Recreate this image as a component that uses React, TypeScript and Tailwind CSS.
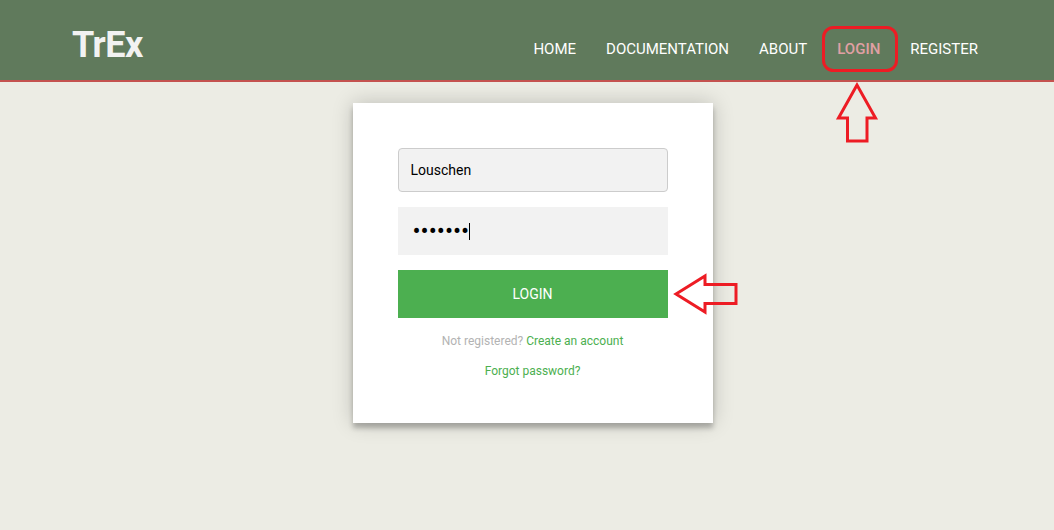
import { useState } from "react";

const navItems = ["Home", "Documentation", "About", "Login", "Register"];

function Annotations() {
  // red callouts drawn over the screenshot
  return (
    <svg
      className="pointer-events-none absolute inset-0"
      width="1054"
      height="530"
      viewBox="0 0 1054 530"
      fill="none"
      stroke="#ed1c24"
      strokeWidth="3"
      strokeLinejoin="miter"
    >
      <rect x="823.5" y="27.5" width="73" height="43" rx="10" />
      <path d="M857 85 L838.5 118 L847.5 118 L847.5 141 L867 141 L867 118 L875.5 118 Z" />
      <path d="M676 294 L705 276 L705 284.5 L736 284.5 L736 303.5 L705 303.5 L705 312 Z" />
    </svg>
  );
}

export default function App() {
  const [user, setUser] = useState("Louschen");
  const [pass, setPass] = useState("1234567");

  return (
    <div
      className="relative min-h-[530px] bg-[#ecece4]"
      style={{ fontFamily: "Roboto, 'Liberation Sans', sans-serif" }}
    >
      <header className="flex h-[82px] items-center justify-between border-b-2 border-[#c4524f] bg-[#607a5c] pl-[72px] pr-[61px] pt-[12px]">
        <a href="#" className="pb-[2px] text-[36px] font-bold leading-none tracking-[-0.5px] text-[#f2f2f2]">
          TrEx
        </a>
        <nav className="mt-[8px] flex items-center pb-[2px] text-[15px] uppercase">
          {navItems.map((item) => (
            <a
              key={item}
              href="#"
              className={
                item === "Login"
                  ? "px-[15px] font-medium text-[#e0a0a4]"
                  : "px-[15px] text-white"
              }
            >
              {item}
            </a>
          ))}
        </nav>
      </header>

      <div className="flex justify-center pl-[11px] pt-[21px]">
        <form
          className="w-[360px] bg-white px-[45px] pb-[44px] pt-[45px] text-center shadow-[0_0_20px_0_rgba(0,0,0,0.2),0_5px_5px_0_rgba(0,0,0,0.24)]"
          onSubmit={(e) => e.preventDefault()}
        >
          <input
            type="text"
            value={user}
            onChange={(e) => setUser(e.target.value)}
            className="mb-[15px] block h-[44px] w-full rounded border border-[#cccccc] bg-[#f2f2f2] px-[12px] text-[14px] text-black outline-none"
          />
          <div className="relative mb-[15px]">
            <input
              type="password"
              value={pass}
              onChange={(e) => setPass(e.target.value)}
              className="block h-[48px] w-full bg-[#f2f2f2] px-[15px] text-[24px] text-black outline-none"
            />
            <span className="absolute left-[71px] top-[16px] h-[17px] w-px bg-black" />
          </div>
          <button
            type="submit"
            className="block h-[48px] w-full bg-[#4caf50] text-[14px] uppercase text-white"
          >
            Login
          </button>
          <p className="mt-[16px] text-[12px] leading-[15px] text-[#b3b3b3]">
            Not registered?{" "}
            <a href="#" className="text-[#4caf50]">
              Create an account
            </a>
          </p>
          <p className="mt-[15px] text-[12px] leading-[15px]">
            <a href="#" className="text-[#4caf50]">
              Forgot password?
            </a>
          </p>
        </form>
      </div>

      <Annotations />
    </div>
  );
}
